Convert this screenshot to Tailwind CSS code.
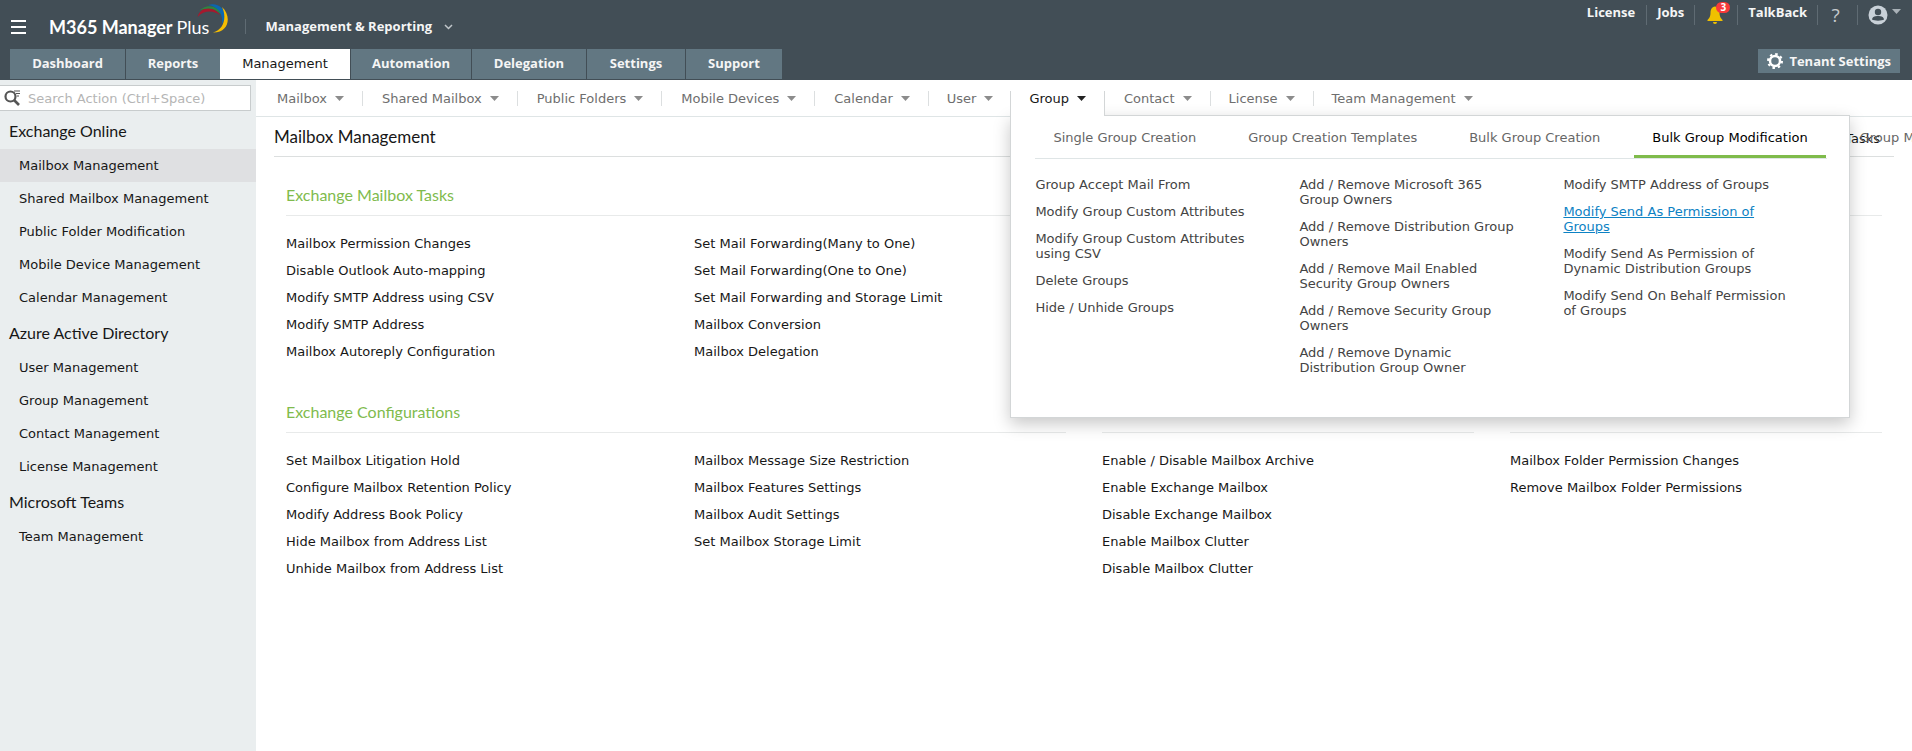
<!DOCTYPE html>
<html lang="en">
<head>
	<title>M365 Manager Plus</title>
	<meta charset="UTF-8">
	<meta name="viewport" content="width=device-width, initial-scale=1.0">
	<script src="https://cdn.jsdelivr.net/npm/@tailwindcss/browser@4"></script>
</head>
<body class="min-h-screen flex flex-col overflow-x-hidden bg-white text-[13px] leading-[15px] text-neutral-900 font-['Verdana','DejaVu_Sans',sans-serif]">
	<header class="bg-[#424e56] text-neutral-100 font-bold font-['Open_Sans',sans-serif]">
		<div class="flex justify-between h-[49px]">
			<div class="flex items-center pl-[11px]">
				<button aria-label="Menu" class="mt-1">
					<svg class="w-[15px] h-[14px]" viewBox="0 0 15 14" fill="#fff"><path d="M0 0h15v2H0zM0 6h15v2H0zM0 12h15v2H0z"/></svg>
				</button>
				<a href="#" class="relative flex items-center ml-[23px] h-full pt-1 pr-9 text-[18px] leading-6 text-white font-['Lato',sans-serif]">
					<span>M365 Manager <span class="font-normal">Plus</span></span>
					<svg class="absolute left-[148px] top-[3px] w-8 h-[31px]" viewBox="0 0 32 31">
						<path d="M0.500 14 C4 3 16 2 23 12 C16 7 7 7 0.500 14Z" fill="#a6192e"/>
						<path d="M2 8 C9 1 21 1 26 14 C20 6 12 3 2 8Z" fill="#2e8540"/>
						<path d="M11 2 C23 -2 33 10 25 21 C26 11 22 4 11 2Z" fill="#0b66b1"/>
						<path d="M25 4 C35 13 32 30 16 29.500 C27 27 30 14 25 4Z" fill="#f5bd02"/>
					</svg>
				</a>
				<button class="flex items-center mt-1 gap-3 border-l border-[#5f6b73] pl-[19px] cursor-pointer">
					<span>Management &amp; Reporting</span>
					<svg class="w-[9px] h-[6px]" viewBox="0 0 9 6" fill="none" stroke="#c0c6ca" stroke-width="1.5"><path d="M1 1l3.500 3.500L8 1"/></svg>
				</button>
			</div>
			<nav class="flex items-start pt-[5px] pr-[11px]">
				<a href="#" class="px-[11px] h-5 border-r border-[#5f6b73]">License</a>
				<a href="#" class="px-[10px] h-5 border-r border-[#5f6b73]">Jobs</a>
				<button aria-label="Notifications" class="relative w-[43px] h-5 pl-3 border-r border-[#5f6b73]">
					<svg class="w-4 h-[18px]" viewBox="0 0 16 18" fill="#f0c000"><path d="M8 0.500C4.500 1 3.500 4 3.500 7C3.500 10 2.500 12 0.500 14V15H15.500V14C13.500 12 12.500 10 12.500 7C12.500 4 11.500 1 8 0.500Z"/><path d="M6 16h4a2 2 0 0 1-4 0z"/></svg>
					<span class="absolute left-[21px] -top-[3px] w-[14px] h-[11px] rounded-full bg-[#f83a3a] text-[10px] leading-[11px] text-center text-white">3</span>
				</button>
				<a href="#" class="px-[10px] h-5 border-r border-[#5f6b73]">TalkBack</a>
				<button aria-label="Help" class="w-10 h-5 pr-1 border-r border-[#5f6b73] text-[19px] leading-[18px] font-normal text-[#c5cacd]">?</button>
				<button aria-label="Account" class="flex items-start pl-[10px] gap-1">
					<svg class="w-5 h-5" viewBox="0 0 20 20"><circle cx="10" cy="10" r="9.500" fill="#c9d1d8"/><circle cx="10" cy="7" r="3.200" fill="#424e56"/><path d="M4 14.500C4.500 11.500 7 11 10 11S15.500 11.500 16 14.500C14 16 6 16 4 14.500Z" fill="#424e56"/></svg>
					<svg class="w-[9px] h-[5px] mt-1" viewBox="0 0 9 5" fill="#a9b1b7"><path d="M0 0h9L4.500 5z"/></svg>
				</button>
			</nav>
		</div>
		<div class="flex justify-between items-start h-[31px] pl-[10px] pr-3">
			<nav class="flex gap-px h-[30px] leading-[29px] text-center">
				<a href="#" class="w-[115px] bg-[#627782]">Dashboard</a>
				<a href="#" class="w-[94px] bg-[#627782]">Reports</a>
				<a href="#" class="w-[130px] -ml-px bg-white text-neutral-900 font-normal font-['Verdana','DejaVu_Sans',sans-serif]">Management</a>
				<a href="#" class="w-[120px] bg-[#627782]">Automation</a>
				<a href="#" class="w-[114px] bg-[#627782]">Delegation</a>
				<a href="#" class="w-[98px] bg-[#627782]">Settings</a>
				<a href="#" class="w-[96px] bg-[#627782]">Support</a>
			</nav>
			<button class="flex items-center gap-1.5 h-6 px-[9px] bg-[#627782]">
				<svg class="w-4 h-4" viewBox="0 0 16 16" fill="none" stroke="#fff"><circle cx="8" cy="8" r="5" stroke-width="2.500"/><circle cx="8" cy="8" r="7" stroke-width="2" stroke-dasharray="2.500 3"/></svg>
				<span>Tenant Settings</span>
			</button>
		</div>
	</header>

	<div class="flex flex-1">
		<aside class="w-64 shrink-0 bg-[#eaeeef] pt-[5px]">
			<form class="flex items-center w-[251px] h-[26px] mb-px bg-white border border-l-0 border-[#c8cccd]">
				<svg class="w-4 h-4 ml-1 shrink-0" viewBox="0 0 16 16" fill="none" stroke="#555"><circle cx="6.500" cy="6.500" r="5" stroke-width="2.200"/><path d="M10 10l5 5" stroke-width="2.600"/><path d="M10 1h6M12 3.500h4M13 6h2" stroke-width="1.200"/></svg>
				<input type="text" aria-label="Search Action" placeholder="Search Action (Ctrl+Space)" class="flex-1 ml-2 outline-none placeholder:text-[#b5b5b5]">
			</form>
			<h2 class="pl-[9px] text-base leading-[37px] font-['Lato',sans-serif]">Exchange Online</h2>
			<ul class="leading-[33px]">
				<li class="pl-[19px] bg-[#dfe0e2]"><a href="#">Mailbox Management</a></li>
				<li class="pl-[19px]"><a href="#">Shared Mailbox Management</a></li>
				<li class="pl-[19px]"><a href="#">Public Folder Modification</a></li>
				<li class="pl-[19px]"><a href="#">Mobile Device Management</a></li>
				<li class="pl-[19px]"><a href="#">Calendar Management</a></li>
			</ul>
			<h2 class="pl-[9px] text-base leading-[37px] font-['Lato',sans-serif]">Azure Active Directory</h2>
			<ul class="leading-[33px]">
				<li class="pl-[19px]"><a href="#">User Management</a></li>
				<li class="pl-[19px]"><a href="#">Group Management</a></li>
				<li class="pl-[19px]"><a href="#">Contact Management</a></li>
				<li class="pl-[19px]"><a href="#">License Management</a></li>
			</ul>
			<h2 class="pl-[9px] text-base leading-[37px] font-['Lato',sans-serif]">Microsoft Teams</h2>
			<ul class="leading-[33px]">
				<li class="pl-[19px]"><a href="#">Team Management</a></li>
			</ul>
		</aside>

		<main class="flex-1 min-w-0">
			<nav class="flex items-start h-[37px] pt-[11px] pl-[2px] border-b border-[#dfe5e6] text-[#6e6e6e] whitespace-nowrap">
				<a href="#" class="flex items-center gap-2 pl-[19px] pr-[18px] border-r border-[#dcdfe0]">Mailbox <svg class="w-[9px] h-[5px]" viewBox="0 0 9 5" fill="#8c8c8c"><path d="M0 0h9L4.500 5z"/></svg></a>
				<a href="#" class="flex items-center gap-2 pl-[19px] pr-[18px] border-r border-[#dcdfe0]">Shared Mailbox <svg class="w-[9px] h-[5px]" viewBox="0 0 9 5" fill="#8c8c8c"><path d="M0 0h9L4.500 5z"/></svg></a>
				<a href="#" class="flex items-center gap-2 pl-[19px] pr-[18px] border-r border-[#dcdfe0]">Public Folders <svg class="w-[9px] h-[5px]" viewBox="0 0 9 5" fill="#8c8c8c"><path d="M0 0h9L4.500 5z"/></svg></a>
				<a href="#" class="flex items-center gap-2 pl-[19px] pr-[18px] border-r border-[#dcdfe0]">Mobile Devices <svg class="w-[9px] h-[5px]" viewBox="0 0 9 5" fill="#8c8c8c"><path d="M0 0h9L4.500 5z"/></svg></a>
				<a href="#" class="flex items-center gap-2 pl-[19px] pr-[18px] border-r border-[#dcdfe0]">Calendar <svg class="w-[9px] h-[5px]" viewBox="0 0 9 5" fill="#8c8c8c"><path d="M0 0h9L4.500 5z"/></svg></a>
				<a href="#" class="flex items-center gap-2 pl-[18px] pr-[17px]">User <svg class="w-[9px] h-[5px]" viewBox="0 0 9 5" fill="#8c8c8c"><path d="M0 0h9L4.500 5z"/></svg></a>
				<div class="relative">
					<a href="#" class="relative z-20 flex items-start gap-2 h-[25px] pl-[18px] pr-[18px] bg-white border-x border-[#d3d6d7] text-neutral-900">Group <svg class="w-[9px] h-[5px] mt-[5px]" viewBox="0 0 9 5" fill="#222"><path d="M0 0h9L4.500 5z"/></svg></a>
					<!-- Group dropdown -->
					<div class="absolute z-10 left-0 top-6 w-[840px] h-[303px] pl-6 pr-[22px] bg-white border border-[#d3d6d7] shadow-[0_6px_16px_rgba(0,0,0,0.22)] text-[#444]">
						<div class="flex gap-4 h-[43px] border-b border-[#dfe5e6] leading-[43px] text-[#666]">
							<a href="#" class="px-[18px]">Single Group Creation</a>
							<a href="#" class="px-[18px]">Group Creation Templates</a>
							<a href="#" class="px-[18px]">Bulk Group Creation</a>
							<a href="#" class="px-[18px] border-b-3 border-[#7fbb4b] text-black">Bulk Group Modification</a>
							<a href="#" class="px-[18px]">Group Management</a>
						</div>
						<div class="grid grid-cols-3 pt-[18px] whitespace-normal">
							<ul class="flex flex-col gap-3 pr-10">
								<li><a href="#">Group Accept Mail From</a></li>
								<li><a href="#">Modify Group Custom Attributes</a></li>
								<li><a href="#">Modify Group Custom Attributes using CSV</a></li>
								<li><a href="#">Delete Groups</a></li>
								<li><a href="#">Hide / Unhide Groups</a></li>
							</ul>
							<ul class="flex flex-col gap-3 pr-10">
								<li><a href="#">Add / Remove Microsoft 365 Group Owners</a></li>
								<li><a href="#">Add / Remove Distribution Group Owners</a></li>
								<li><a href="#">Add / Remove Mail Enabled Security Group Owners</a></li>
								<li><a href="#">Add / Remove Security Group Owners</a></li>
								<li><a href="#">Add / Remove Dynamic Distribution Group Owner</a></li>
							</ul>
							<ul class="flex flex-col gap-3 pr-10">
								<li><a href="#">Modify SMTP Address of Groups</a></li>
								<li><a href="#" class="text-[#0d82c4] underline">Modify Send As Permission of Groups</a></li>
								<li><a href="#">Modify Send As Permission of Dynamic Distribution Groups</a></li>
								<li><a href="#">Modify Send On Behalf Permission of Groups</a></li>
							</ul>
						</div>
					</div>
				</div>
				<a href="#" class="flex items-center gap-2 pl-[19px] pr-[18px] border-r border-[#dcdfe0]">Contact <svg class="w-[9px] h-[5px]" viewBox="0 0 9 5" fill="#8c8c8c"><path d="M0 0h9L4.500 5z"/></svg></a>
				<a href="#" class="flex items-center gap-2 pl-[18px] pr-[18px] border-r border-[#dcdfe0]">License <svg class="w-[9px] h-[5px]" viewBox="0 0 9 5" fill="#8c8c8c"><path d="M0 0h9L4.500 5z"/></svg></a>
				<a href="#" class="flex items-center gap-2 pl-[18px] pr-[18px]">Team Management <svg class="w-[9px] h-[5px]" viewBox="0 0 9 5" fill="#8c8c8c"><path d="M0 0h9L4.500 5z"/></svg></a>
			</nav>

			<div class="flex items-center justify-between h-10 ml-[18px] mr-[18px] pr-[14px] border-b border-[#dcdfdf]">
				<h1 class="text-[17px] leading-5 font-['Lato',sans-serif]">Mailbox Management</h1>
				<a href="#" class="pt-[3px]">All Tasks</a>
			</div>

			<div class="px-[30px] pt-[26px]">
				<section class="grid grid-cols-4 gap-x-9 mb-[41px]">
					<h3 class="col-span-2 h-[33px] border-b border-[#e8eaea] text-base leading-6 text-[#80bb4d] font-['Lato',sans-serif]">Exchange Mailbox Tasks</h3>
					<div class="h-[33px] border-b border-[#e8eaea]"></div>
					<div class="h-[33px] border-b border-[#e8eaea]"></div>
					<ul class="flex flex-col gap-3 pt-5">
						<li><a href="#">Mailbox Permission Changes</a></li>
						<li><a href="#">Disable Outlook Auto-mapping</a></li>
						<li><a href="#">Modify SMTP Address using CSV</a></li>
						<li><a href="#">Modify SMTP Address</a></li>
						<li><a href="#">Mailbox Autoreply Configuration</a></li>
					</ul>
					<ul class="flex flex-col gap-3 pt-5">
						<li><a href="#">Set Mail Forwarding(Many to One)</a></li>
						<li><a href="#">Set Mail Forwarding(One to One)</a></li>
						<li><a href="#">Set Mail Forwarding and Storage Limit</a></li>
						<li><a href="#">Mailbox Conversion</a></li>
						<li><a href="#">Mailbox Delegation</a></li>
					</ul>
				</section>
				<section class="grid grid-cols-4 gap-x-9">
					<h3 class="col-span-2 h-[33px] border-b border-[#e8eaea] text-base leading-6 text-[#80bb4d] font-['Lato',sans-serif]">Exchange Configurations</h3>
					<div class="h-[33px] border-b border-[#e8eaea]"></div>
					<div class="h-[33px] border-b border-[#e8eaea]"></div>
					<ul class="flex flex-col gap-3 pt-5">
						<li><a href="#">Set Mailbox Litigation Hold</a></li>
						<li><a href="#">Configure Mailbox Retention Policy</a></li>
						<li><a href="#">Modify Address Book Policy</a></li>
						<li><a href="#">Hide Mailbox from Address List</a></li>
						<li><a href="#">Unhide Mailbox from Address List</a></li>
					</ul>
					<ul class="flex flex-col gap-3 pt-5">
						<li><a href="#">Mailbox Message Size Restriction</a></li>
						<li><a href="#">Mailbox Features Settings</a></li>
						<li><a href="#">Mailbox Audit Settings</a></li>
						<li><a href="#">Set Mailbox Storage Limit</a></li>
					</ul>
					<ul class="flex flex-col gap-3 pt-5">
						<li><a href="#">Enable / Disable Mailbox Archive</a></li>
						<li><a href="#">Enable Exchange Mailbox</a></li>
						<li><a href="#">Disable Exchange Mailbox</a></li>
						<li><a href="#">Enable Mailbox Clutter</a></li>
						<li><a href="#">Disable Mailbox Clutter</a></li>
					</ul>
					<ul class="flex flex-col gap-3 pt-5">
						<li><a href="#">Mailbox Folder Permission Changes</a></li>
						<li><a href="#">Remove Mailbox Folder Permissions</a></li>
					</ul>
				</section>
			</div>
		</main>
	</div>
</body>
</html>
